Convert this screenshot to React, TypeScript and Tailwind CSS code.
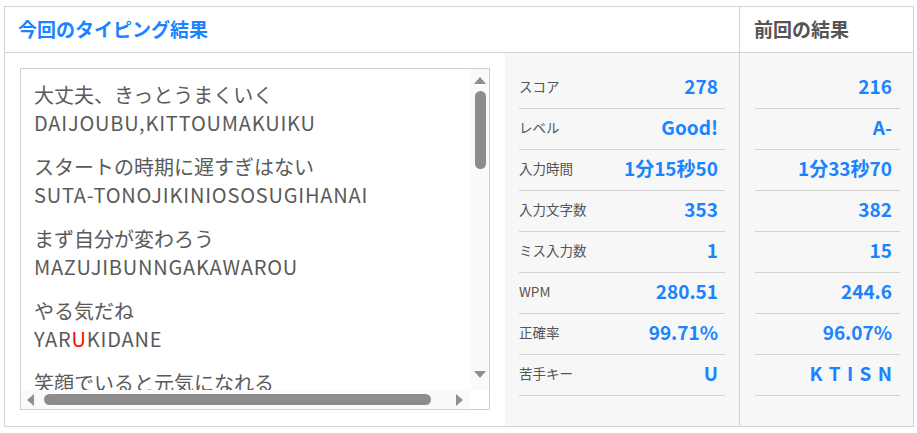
import React from "react";

const font = { fontFamily: '"Noto Sans CJK JP", "Noto Sans", sans-serif' };

const rows: { label: string; cur: string; prev: string }[] = [
  { label: "スコア", cur: "278", prev: "216" },
  { label: "レベル", cur: "Good!", prev: "A-" },
  { label: "入力時間", cur: "1分15秒50", prev: "1分33秒70" },
  { label: "入力文字数", cur: "353", prev: "382" },
  { label: "ミス入力数", cur: "1", prev: "15" },
  { label: "WPM", cur: "280.51", prev: "244.6" },
  { label: "正確率", cur: "99.71%", prev: "96.07%" },
  { label: "苦手キー", cur: "U", prev: "K T I S N" },
];

function Group({ jp, roma }: { jp: string; roma: React.ReactNode }) {
  return (
    <div className="mb-[16px]">
      <div className="leading-[28px] whitespace-nowrap">{jp}</div>
      <div className="leading-[28px] whitespace-nowrap tracking-[0.8px]">{roma}</div>
    </div>
  );
}

export default function App() {
  return (
    <div className="w-[917px] h-[433px] bg-white pt-[6px] pl-[4px]" style={font}>
      <div className="w-[910px] h-[421px] border border-[#d2d2d2] flex">
        {/* left column */}
        <div className="w-[735px] flex flex-col border-r border-[#d2d2d2]">
          <div className="h-[46px] border-b border-[#d2d2d2] flex items-center pl-[13px] pb-[3px]">
            <span className="text-[19px] font-bold text-[#1a84ff] leading-none">今回のタイピング結果</span>
          </div>
          <div className="flex-1 flex">
            <div className="w-[500px] pt-[15px] pl-[15px]">
              <div className="w-[470px] h-[342px] border border-[#cfcfcf] flex flex-col">
                <div className="flex-1 flex min-h-0">
                  <div className="flex-1 overflow-hidden pl-[13px] pt-[12px] text-[20px] text-[#5a5a5a]">
                    <Group jp="大丈夫、きっとうまくいく" roma="DAIJOUBU,KITTOUMAKUIKU" />
                    <Group jp="スタートの時期に遅すぎはない" roma="SUTA-TONOJIKINIOSOSUGIHANAI" />
                    <Group jp="まず自分が変わろう" roma="MAZUJIBUNNGAKAWAROU" />
                    <Group
                      jp="やる気だね"
                      roma={
                        <>
                          YAR<span className="text-[#ff0000]">U</span>KIDANE
                        </>
                      }
                    />
                    <Group jp="笑顔でいると元気になれる" roma="EGAODEIRUTOGENKININARERU" />
                  </div>
                  <div className="w-[18px] bg-[#fafafa] flex flex-col items-center">
                    <div className="mt-[8px] w-0 h-0 border-l-[6px] border-r-[6px] border-b-[7px] border-l-transparent border-r-transparent border-b-[#8f8f8f]" />
                    <div className="mt-[7px] w-[11px] h-[78px] rounded-full bg-[#8c8c8c]" />
                    <div className="flex-1" />
                    <div className="mb-[12px] w-0 h-0 border-l-[6px] border-r-[6px] border-t-[7px] border-l-transparent border-r-transparent border-t-[#8f8f8f]" />
                  </div>
                </div>
                <div className="h-[19px] flex">
                  <div className="flex-1 bg-[#fafafa] flex items-center pl-[6px]">
                    <div className="w-0 h-0 border-t-[6px] border-b-[6px] border-r-[7px] border-t-transparent border-b-transparent border-r-[#8f8f8f]" />
                    <div className="ml-[10px] w-[387px] h-[11px] rounded-full bg-[#8c8c8c]" />
                    <div className="ml-[25px] w-0 h-0 border-t-[6px] border-b-[6px] border-l-[7px] border-t-transparent border-b-transparent border-l-[#8f8f8f]" />
                  </div>
                  <div className="w-[18px] bg-white" />
                </div>
              </div>
            </div>
            <div className="flex-1 bg-[#f7f7f7] pt-[15px] pl-[14px] pr-[14px]">
              {rows.map((r) => (
                <div key={r.label} className="h-[41px] border-b border-[#d2d2d2] flex items-center justify-between pr-[7px] pb-[3px]">
                  <span className="text-[13.5px] text-[#555]">{r.label}</span>
                  <span className="text-[19px] font-bold text-[#1a84ff] [word-spacing:2px]">{r.cur}</span>
                </div>
              ))}
            </div>
          </div>
        </div>
        {/* right column */}
        <div className="flex-1 flex flex-col">
          <div className="h-[46px] border-b border-[#d2d2d2] flex items-center pl-[14px] pb-[3px]">
            <span className="text-[19px] font-bold text-[#555] leading-none">前回の結果</span>
          </div>
          <div className="flex-1 bg-[#f7f7f7] pt-[15px] pl-[15px] pr-[13px]">
            {rows.map((r) => (
              <div key={r.label} className="h-[41px] border-b border-[#d2d2d2] flex items-center justify-end pr-[8px] pb-[3px]">
                <span className="text-[19px] font-bold text-[#1a84ff] [word-spacing:2px]">{r.prev}</span>
              </div>
            ))}
          </div>
        </div>
      </div>
    </div>
  );
}
